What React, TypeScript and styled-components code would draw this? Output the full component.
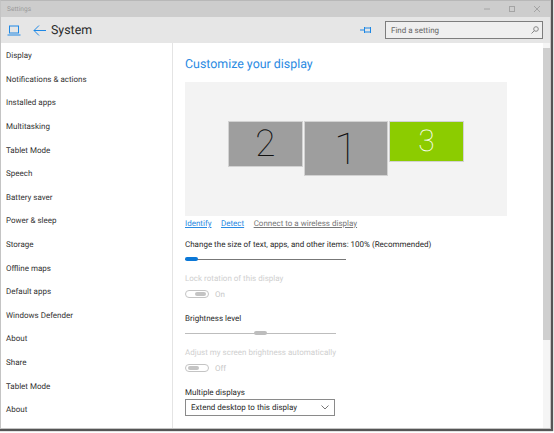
import styled, { createGlobalStyle } from "styled-components";

const GlobalStyle = createGlobalStyle`
  html, body {
    margin: 0;
    padding: 0;
    background: #fff;
    overflow: hidden;
  }
  * {
    box-sizing: border-box;
  }
`;

const menuItems = [
  "Display",
  "Notifications & actions",
  "Installed apps",
  "Multitasking",
  "Tablet Mode",
  "Speech",
  "Battery saver",
  "Power & sleep",
  "Storage",
  "Offline maps",
  "Default apps",
  "Windows Defender",
  "About",
  "Share",
  "Tablet Mode",
  "About",
];

const Page = styled.div`
  width: 554px;
  height: 433px;
  padding: 0 3px 4px 0;
  font-family: Roboto, "Open Sans", sans-serif;
  font-size: 8px;
  color: #2a2a2a;
  background: #fff;
  text-rendering: geometricPrecision;
`;

const Window = styled.div`
  width: 100%;
  height: 100%;
  display: flex;
  flex-direction: column;
  border: 1px solid #c4c4c4;
  border-top: 1px solid #b8b8b8;
  background: #fff;
  box-shadow: 1px 1px 1px 1px #555;
`;

const TitleBar = styled.div`
  height: 16px;
  flex: none;
  display: flex;
  align-items: center;
  justify-content: space-between;
  padding: 0 10px 0 6px;
  background: #cdcdcd;
  color: #9a9a9a;
  font-size: 6.6px;
`;

const WindowButtons = styled.div`
  display: flex;
  align-items: center;
  gap: 19px;
  color: #a4a4a4;
`;

const Header = styled.div`
  height: 26px;
  flex: none;
  display: flex;
  align-items: center;
  padding: 0 7px 0 6px;
  background: #e6e6e6;
`;

const HeaderTitle = styled.div`
  margin-left: 5px;
  padding-top: 1px;
  font-size: 12.4px;
  color: #2a2a2a;
`;

const BackIcon = styled.svg`
  margin-left: 12px;
`;

const PinIcon = styled.svg`
  margin-left: auto;
  margin-right: 13px;
`;

const SearchBox = styled.div`
  width: 158px;
  height: 18px;
  display: flex;
  align-items: center;
  justify-content: space-between;
  padding: 0 3px 0 5px;
  border: 1px solid #7d7d7d;
  background: #efefef;
  color: #666;
  font-size: 8px;
`;

const Body = styled.div`
  flex: 1;
  min-height: 0;
  display: flex;
`;

const Sidebar = styled.nav`
  width: 172px;
  flex: none;
  padding: 1px 0 0 5px;
  border-right: 1px solid #e4e4e4;
`;

const MenuItem = styled.div`
  height: 23.6px;
  display: flex;
  align-items: center;
  color: #333;
`;

const Content = styled.main`
  flex: 1;
  min-width: 0;
  padding: 11px 0 0 12px;
`;

const Heading = styled.h1`
  margin: 0 0 8px;
  height: 20px;
  padding-top: 1px;
  line-height: 20px;
  font-size: 12.4px;
  font-weight: 400;
  color: #2a8ae2;
`;

const Preview = styled.div`
  width: 322px;
  height: 134px;
  display: flex;
  align-items: flex-start;
  gap: 1px;
  padding: 39px 0 0 43px;
  background: #f3f3f3;
`;

const Monitor = styled.div<{ $w: number; $h: number; $size: number; $active?: boolean }>`
  width: ${(p) => p.$w}px;
  height: ${(p) => p.$h}px;
  display: flex;
  align-items: center;
  justify-content: center;
  border: 1px solid #d2d2d2;
  background: ${(p) => (p.$active ? "#8ccc00" : "#9e9e9e")};
  color: ${(p) => (p.$active ? "#fff" : "#111")};
  font-size: ${(p) => p.$size}px;
  font-weight: 100;
  line-height: 1;
`;

const Links = styled.div`
  display: flex;
  gap: 9.5px;
  height: 15px;
  align-items: center;
`;

const LinkText = styled.span<{ $muted?: boolean }>`
  color: ${(p) => (p.$muted ? "#777" : "#2a8ae2")};
  text-decoration: underline;
`;

const Label = styled.div<{ $disabled?: boolean }>`
  height: 14px;
  padding-top: 1px;
  line-height: 14px;
  color: ${(p) => (p.$disabled ? "#cfcfcf" : "#2a2a2a")};
`;

const SliderTrack = styled.div<{ $w: number; $color: string }>`
  position: relative;
  width: ${(p) => p.$w}px;
  height: 1px;
  background: ${(p) => p.$color};
`;

const SliderThumb = styled.div<{ $left: number; $color: string }>`
  position: absolute;
  left: ${(p) => p.$left}px;
  top: -2px;
  width: 13px;
  height: 4px;
  border-radius: 2px;
  background: ${(p) => p.$color};
`;

const Row = styled.div<{ $top: number }>`
  margin-top: ${(p) => p.$top}px;
`;

const ToggleRow = styled.div`
  display: flex;
  align-items: center;
  gap: 6px;
  height: 10px;
  color: #c8c8c8;
`;

const Toggle = styled.div<{ $on?: boolean }>`
  width: 24px;
  height: 8px;
  display: flex;
  align-items: center;
  justify-content: ${(p) => (p.$on ? "flex-end" : "flex-start")};
  padding: 0 2px;
  border: 1px solid #c4c4c4;
  border-radius: 4px;
`;

const ToggleKnob = styled.div`
  width: 11px;
  height: 4px;
  border-radius: 2px;
  background: #c4c4c4;
`;

const Select = styled.div`
  width: 150px;
  height: 17px;
  display: flex;
  align-items: center;
  justify-content: space-between;
  padding: 0 5px;
  border: 1px solid #8a8a8a;
  color: #2a2a2a;
`;

const Scrollbar = styled.div`
  width: 7px;
  flex: none;
  display: flex;
  flex-direction: column;
  background: #f5f5f5;
`;

const ScrollArrow = styled.div`
  height: 5px;
  flex: none;
`;

const ScrollThumb = styled.div`
  height: 292px;
  flex: none;
  background: #cfcfcf;
`;

export default function App() {
  return (
    <>
      <GlobalStyle />
      <Page>
        <Window>
          <TitleBar>
            <span>Settings</span>
            <WindowButtons>
              <svg width="6" height="6" viewBox="0 0 6 6">
                <path d="M0 3h6" stroke="currentColor" fill="none" />
              </svg>
              <svg width="6" height="6" viewBox="0 0 6 6">
                <rect x=".5" y=".5" width="5" height="5" stroke="currentColor" fill="none" />
              </svg>
              <svg width="6" height="6" viewBox="0 0 6 6">
                <path d="M0 0l6 6M6 0L0 6" stroke="currentColor" fill="none" />
              </svg>
            </WindowButtons>
          </TitleBar>
          <Header>
            <svg width="14" height="11" viewBox="0 0 14 11" fill="none" stroke="#1e88e5">
              <rect x="2.5" y="1" width="9" height="7" />
              <path d="M0.5 10h13" />
            </svg>
            <BackIcon width="13" height="11" viewBox="0 0 13 11" fill="none" stroke="#1e88e5">
              <path d="M13 5.5H1M6 .5l-5 5 5 5" />
            </BackIcon>
            <HeaderTitle>System</HeaderTitle>
            <PinIcon width="12" height="8" viewBox="0 0 12 8" fill="none" stroke="#1e88e5">
              <path d="M0 4h4M4.5 1v6M4.5 2h6M4.5 6h6M10.5 1v6" />
            </PinIcon>
            <SearchBox>
              <span>Find a setting</span>
              <svg width="8" height="8" viewBox="0 0 8 8" fill="none" stroke="#888">
                <circle cx="5" cy="3" r="2.3" />
                <path d="M3.4 4.6L.5 7.5" />
              </svg>
            </SearchBox>
          </Header>
          <Body>
            <Sidebar>
              {menuItems.map((item, i) => (
                <MenuItem key={i}>{item}</MenuItem>
              ))}
            </Sidebar>
            <Content>
              <Heading>Customize your display</Heading>
              <Preview>
                <Monitor $w={75} $h={46} $size={37}>2</Monitor>
                <Monitor $w={84} $h={55} $size={44}>1</Monitor>
                <Monitor $w={75} $h={41} $size={30} $active>3</Monitor>
              </Preview>
              <Links>
                <LinkText>Identify</LinkText>
                <LinkText>Detect</LinkText>
                <LinkText $muted>Connect to a wireless display</LinkText>
              </Links>
              <Row $top={6}>
                <Label>Change the size of text, apps, and other items: 100% (Recommended)</Label>
              </Row>
              <Row $top={8}>
                <SliderTrack $w={161} $color="#777">
                  <SliderThumb $left={0} $color="#0b78d7" />
                </SliderTrack>
              </Row>
              <Row $top={11}>
                <Label $disabled>Lock rotation of this display</Label>
              </Row>
              <Row $top={4}>
                <ToggleRow>
                  <Toggle $on>
                    <ToggleKnob />
                  </Toggle>
                  <span>On</span>
                </ToggleRow>
              </Row>
              <Row $top={12}>
                <Label>Brightness level</Label>
              </Row>
              <Row $top={8}>
                <SliderTrack $w={151} $color="#bdbdbd">
                  <SliderThumb $left={69} $color="#bdbdbd" />
                </SliderTrack>
              </Row>
              <Row $top={11}>
                <Label $disabled>Adjust my screen brightness automatically</Label>
              </Row>
              <Row $top={4}>
                <ToggleRow>
                  <Toggle>
                    <ToggleKnob />
                  </Toggle>
                  <span>Off</span>
                </ToggleRow>
              </Row>
              <Row $top={12}>
                <Label>Multiple displays</Label>
              </Row>
              <Select>
                <span>Extend desktop to this display</span>
                <svg width="8" height="5" viewBox="0 0 8 5" fill="none" stroke="#777">
                  <path d="M.5.5L4 4 7.5.5" />
                </svg>
              </Select>
            </Content>
            <Scrollbar>
              <ScrollArrow />
              <ScrollThumb />
            </Scrollbar>
          </Body>
        </Window>
      </Page>
    </>
  );
}
